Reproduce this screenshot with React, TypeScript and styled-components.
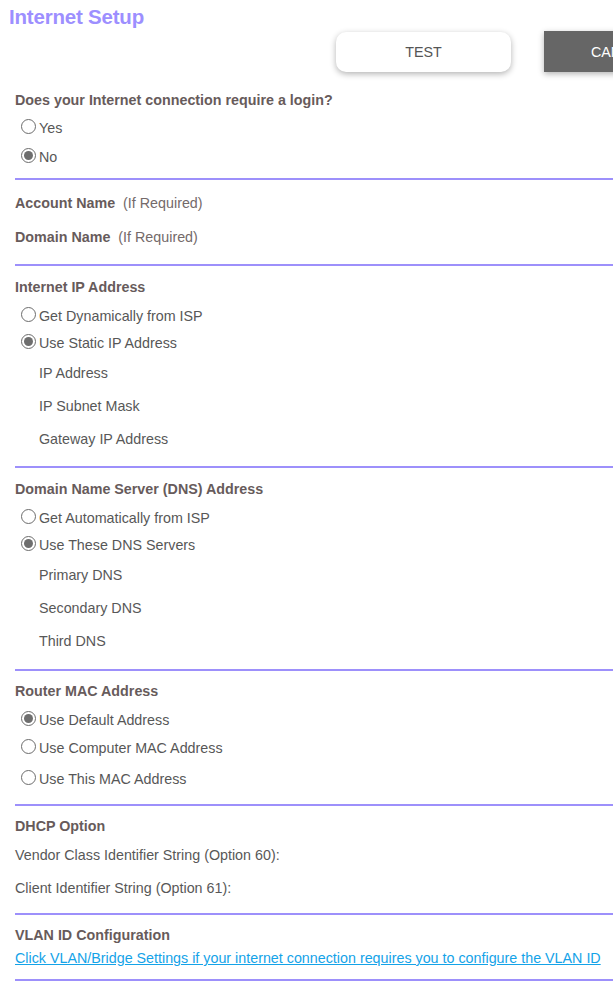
import React from 'react';
import styled, { createGlobalStyle } from 'styled-components';

const GlobalStyle = createGlobalStyle`
  html, body {
    margin: 0;
    padding: 0;
    background: #ffffff;
    overflow-x: hidden;
  }
  body {
    font-family: "Liberation Sans", Arial, sans-serif;
    width: 613px;
  }
`;

const Page = styled.div`
  width: 613px;
  overflow: hidden;
  padding-bottom: 16px;
`;

const Title = styled.h1`
  margin: 0;
  padding: 5px 0 0 9px;
  height: 26px;
  font-size: 20.5px;
  line-height: 24px;
  font-weight: bold;
  color: #9d8fff;
  letter-spacing: -0.2px;
`;

const ButtonBar = styled.div`
  display: flex;
  gap: 33px;
  padding-left: 336px;
  height: 42px;
  width: 760px;
`;

const Button = styled.button<{ $dark?: boolean }>`
  width: 175px;
  height: ${p => (p.$dark ? '41px' : '40px')};
  margin-top: ${p => (p.$dark ? '0' : '1px')};
  flex: none;
  border: none;
  border-radius: ${p => (p.$dark ? '0' : '10px')};
  background: ${p => (p.$dark ? '#666666' : '#ffffff')};
  color: ${p => (p.$dark ? '#ffffff' : '#555555')};
  box-shadow: 0 2px 6px rgba(0, 0, 0, 0.3);
  font-family: "Liberation Sans", Arial, sans-serif;
  font-size: 14.3px;
  text-align: ${p => (p.$dark ? 'left' : 'center')};
  padding: ${p => (p.$dark ? '0 0 0 47px' : '0')};
`;

const Section = styled.section<{ $top: number }>`
  margin-left: 15px;
  padding-top: ${p => p.$top}px;
`;

const Divider = styled.div<{ $gap: number }>`
  margin-top: ${p => p.$gap}px;
  height: 2px;
  background: #9d90fb;
`;

const Heading = styled.div<{ $h?: number }>`
  height: ${p => p.$h ?? 28}px;
  display: flex;
  align-items: center;
  font-size: 14.3px;
  font-weight: bold;
  color: #675b5b;
  white-space: nowrap;
`;

const Note = styled.span`
  font-weight: normal;
  color: #746a6a;
  margin-left: 8px;
`;

const RadioRow = styled.label<{ $h?: number }>`
  height: ${p => p.$h ?? 29}px;
  display: flex;
  align-items: center;
  padding-left: 6px;
  font-size: 14.3px;
  color: #575757;
`;

const RadioCircle = styled.span<{ $on?: boolean }>`
  width: 15px;
  height: 15px;
  box-sizing: border-box;
  border-radius: 50%;
  border: 1px solid #6c6c6c;
  background: #ffffff;
  margin-right: 3px;
  margin-top: -3px;
  display: flex;
  align-items: center;
  justify-content: center;
  flex: none;
  &::after {
    content: '';
    display: ${p => (p.$on ? 'block' : 'none')};
    width: 9px;
    height: 9px;
    border-radius: 50%;
    background: #6e6e6e;
  }
`;

const Field = styled.div<{ $h?: number; $indent?: boolean }>`
  height: ${p => p.$h ?? 33}px;
  display: flex;
  align-items: center;
  padding-left: ${p => (p.$indent ? '24px' : '0')};
  font-size: 14.3px;
  color: #585858;
  white-space: nowrap;
`;

const Link = styled.a`
  display: block;
  height: 22px;
  line-height: 22px;
  font-size: 14.3px;
  color: #14a3e8;
  text-decoration: underline;
  white-space: nowrap;
`;

const Radio = ({ on, label, h }: { on?: boolean; label: string; h?: number }) => (
  <RadioRow $h={h}>
    <RadioCircle $on={on} />
    {label}
  </RadioRow>
);

export default function App() {
  return (
    <Page>
      <GlobalStyle />
      <Title>Internet Setup</Title>
      <ButtonBar>
        <Button>TEST</Button>
        <Button $dark>CANCEL</Button>
      </ButtonBar>

      <Section $top={13}>
        <Heading $h={27}>Does your Internet connection require a login?</Heading>
        <Radio label="Yes" />
        <Radio on label="No" />
        <Divider $gap={7} />
      </Section>

      <Section $top={6}>
        <Heading $h={34}>
          Account Name<Note>(If Required)</Note>
        </Heading>
        <Heading $h={34}>
          Domain Name<Note>(If Required)</Note>
        </Heading>
        <Divider $gap={10} />
      </Section>

      <Section $top={7}>
        <Heading>Internet IP Address</Heading>
        <Radio label="Get Dynamically from ISP" />
        <Radio on label="Use Static IP Address" h={26} />
        <Field $indent>IP Address</Field>
        <Field $indent>IP Subnet Mask</Field>
        <Field $indent>Gateway IP Address</Field>
        <Divider $gap={11} />
      </Section>

      <Section $top={7}>
        <Heading>Domain Name Server (DNS) Address</Heading>
        <Radio label="Get Automatically from ISP" />
        <Radio on label="Use These DNS Servers" h={26} />
        <Field $indent>Primary DNS</Field>
        <Field $indent>Secondary DNS</Field>
        <Field $indent>Third DNS</Field>
        <Divider $gap={12} />
      </Section>

      <Section $top={6}>
        <Heading>Router MAC Address</Heading>
        <Radio on label="Use Default Address" />
        <Radio label="Use Computer MAC Address" h={27} />
        <Radio label="Use This MAC Address" h={35} />
        <Divider $gap={8} />
      </Section>

      <Section $top={7}>
        <Heading $h={25}>DHCP Option</Heading>
        <Field>Vendor Class Identifier String (Option 60):</Field>
        <Field>Client Identifier String (Option 61):</Field>
        <Divider $gap={9} />
      </Section>

      <Section $top={7}>
        <Heading $h={25}>VLAN ID Configuration</Heading>
        <Link href="#">
          Click VLAN/Bridge Settings if your internet connection requires you to configure the VLAN ID
        </Link>
        <Divider $gap={10} />
      </Section>
    </Page>
  );
}
